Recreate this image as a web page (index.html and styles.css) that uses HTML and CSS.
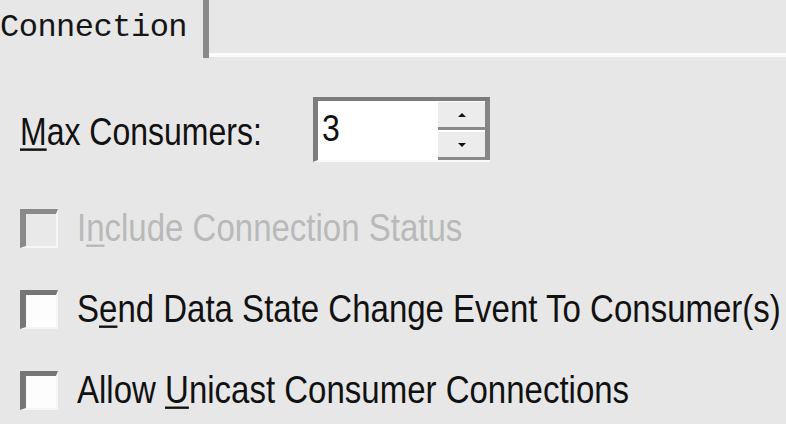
FILE: index.html
```html
<!DOCTYPE html>
<html lang="en">
<head>
    <meta charset="UTF-8">
    <meta name="viewport" content="width=device-width, initial-scale=1.0">
    <title>Connection</title>
    <link rel="stylesheet" href="styles.css">
</head>
<body>

<div class="tabs">
    <div class="tab">Connection</div>
    <div class="tab-edge"></div>
    <div class="tab-rest"></div>
</div>

<div class="panel">
    <div class="field">
        <span class="label"><u>M</u>ax Consumers:</span>
        <div class="spin">
            <div class="spin-value">3</div>
            <div class="spin-buttons">
                <div class="spin-btn"><span class="arrow up"></span></div>
                <div class="spin-btn"><span class="arrow down"></span></div>
            </div>
        </div>
    </div>

    <div class="checks">
        <div class="check disabled">
            <span class="box"></span>
            <span class="text">I<u>n</u>clude Connection Status</span>
        </div>
        <div class="check">
            <span class="box"></span>
            <span class="text">S<u>e</u>nd Data State Change Event To Consumer(s)</span>
        </div>
        <div class="check">
            <span class="box"></span>
            <span class="text">Allow <u>U</u>nicast Consumer Connections</span>
        </div>
    </div>
</div>

</body>
</html>
```

FILE: styles.css
```css
body {
    margin: 0;
    padding: 0;
    background-color: #e7e7e7;
    font-family: "Liberation Sans", Arial, sans-serif;
    color: #111;
    overflow: hidden;
}
u {
    text-decoration-thickness: 2px;
    text-underline-offset: 3px;
}
.tabs {
    display: flex;
    height: 58px;
}
.tab {
    width: 203px;
    font-family: "Liberation Mono", monospace;
    font-size: 32px;
    line-height: 32px;
    padding-top: 12px;
    color: #151515;
    letter-spacing: -0.5px;
}
.tab-edge {
    width: 6px;
    background-color: #8a8a8a;
}
.tab-rest {
    flex: 1;
    border-bottom: 4px solid #fbfbfb;
    margin-bottom: 1px;
}
.panel {
    padding: 39px 0 0 20px;
}
.field {
    display: flex;
    align-items: center;
    height: 65px;
}
.label {
    display: inline-block;
    width: 293px;
    flex-shrink: 0;
    font-size: 32px;
    white-space: nowrap;
    padding-top: 4px;
    transform: scaleY(1.22);
    transform-origin: left center;
}
.spin {
    display: flex;
    width: 172px;
    height: 59px;
    flex-shrink: 0;
    background-color: #fff;
    border-top: 4px solid #7c7c7c;
    border-left: 5px solid #7c7c7c;
    border-bottom: 2px solid #fafafa;
}
.spin-value {
    flex: 1;
    font-size: 32px;
    line-height: 32px;
    padding: 8px 0 0 4px;
    transform: scaleY(1.15);
    transform-origin: left top;
}
.spin-buttons {
    display: flex;
    flex-direction: column;
    gap: 2px;
    width: 47px;
    padding-top: 1px;
    border-right: 5px solid #858585;
}
.spin-btn {
    flex: 1;
    display: flex;
    justify-content: center;
    align-items: center;
    background-color: #ececec;
    border-bottom: 3px solid #8a8a8a;
}
.arrow {
    width: 0;
    height: 0;
    border-left: 4px solid transparent;
    border-right: 4px solid transparent;
}
.arrow.up {
    border-bottom: 4px solid #111;
}
.arrow.down {
    border-top: 4px solid #111;
}
.checks {
    display: flex;
    flex-direction: column;
    gap: 41px;
    margin-top: 46px;
}
.check {
    display: flex;
    align-items: center;
    height: 40px;
}
.box {
    flex-shrink: 0;
    width: 30px;
    height: 32px;
    background-color: #fdfdfd;
    border-top: 5px solid #767676;
    border-left: 6px solid #767676;
    border-right: 2px solid #f6f6f6;
    border-bottom: 2px solid #f6f6f6;
}
.text {
    display: inline-block;
    margin-left: 19px;
    font-size: 33px;
    white-space: nowrap;
    transform: scaleY(1.18);
    transform-origin: left center;
}
.check.disabled .box {
    background-color: #e9e9e9;
    border-top-color: #8a8a8a;
    border-left-color: #8a8a8a;
}
.check.disabled .text {
    color: #b9b9b9;
}
```
